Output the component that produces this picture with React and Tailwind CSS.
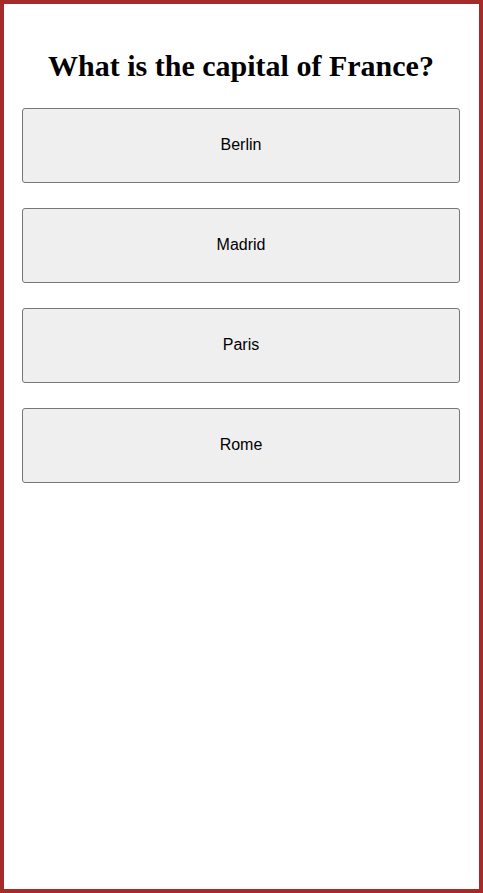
export default function App() {
  const options = ["Berlin", "Madrid", "Paris", "Rome"];
  return (
    <div className="box-border h-[893px] w-full border-4 border-[#a52a2a] bg-white pl-[18px] pr-[19px]">
      <h1
        className="mt-[46px] mb-[26px] text-center text-[30px] leading-[32px] font-bold text-black"
        style={{ fontFamily: '"Liberation Serif", "Times New Roman", serif' }}
      >
        What is the capital of France?
      </h1>
      <div className="flex flex-col gap-[25px]">
        {options.map((o) => (
          <button
            key={o}
            className="box-border h-[75px] w-full rounded-[3px] border border-[#767676] bg-[#efefef] pb-[2px] text-[16px] text-black"
            style={{ fontFamily: '"Liberation Sans", Arial, sans-serif' }}
          >
            {o}
          </button>
        ))}
      </div>
    </div>
  );
}
